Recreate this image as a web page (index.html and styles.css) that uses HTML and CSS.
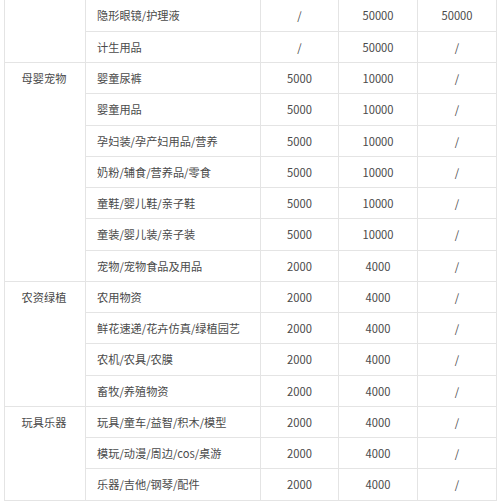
FILE: index.html
```html
<!DOCTYPE html>
<html lang="zh">
<head>
<meta charset="utf-8">
<link rel="stylesheet" href="styles.css">
</head>
<body>
<table class="grid">
  <colgroup>
    <col class="c-cat"><col class="c-sub"><col class="c-num"><col class="c-num2"><col class="c-num3">
  </colgroup>
  <tbody>
    <tr class="cut"><td class="cat" rowspan="2"></td><td class="sub">隐形眼镜/护理液</td><td>/</td><td>50000</td><td>50000</td></tr>
    <tr><td class="sub">计生用品</td><td>/</td><td>50000</td><td>/</td></tr>

    <tr><td class="cat" rowspan="7">母婴宠物</td><td class="sub">婴童尿裤</td><td>5000</td><td>10000</td><td>/</td></tr>
    <tr><td class="sub">婴童用品</td><td>5000</td><td>10000</td><td>/</td></tr>
    <tr><td class="sub">孕妇装/孕产妇用品/营养</td><td>5000</td><td>10000</td><td>/</td></tr>
    <tr><td class="sub">奶粉/辅食/营养品/零食</td><td>5000</td><td>10000</td><td>/</td></tr>
    <tr><td class="sub">童鞋/婴儿鞋/亲子鞋</td><td>5000</td><td>10000</td><td>/</td></tr>
    <tr><td class="sub">童装/婴儿装/亲子装</td><td>5000</td><td>10000</td><td>/</td></tr>
    <tr><td class="sub">宠物/宠物食品及用品</td><td>2000</td><td>4000</td><td>/</td></tr>

    <tr><td class="cat" rowspan="4">农资绿植</td><td class="sub">农用物资</td><td>2000</td><td>4000</td><td>/</td></tr>
    <tr><td class="sub">鲜花速递/花卉仿真/绿植园艺</td><td>2000</td><td>4000</td><td>/</td></tr>
    <tr><td class="sub">农机/农具/农膜</td><td>2000</td><td>4000</td><td>/</td></tr>
    <tr><td class="sub">畜牧/养殖物资</td><td>2000</td><td>4000</td><td>/</td></tr>

    <tr><td class="cat" rowspan="3">玩具乐器</td><td class="sub">玩具/童车/益智/积木/模型</td><td>2000</td><td>4000</td><td>/</td></tr>
    <tr><td class="sub">模玩/动漫/周边/cos/桌游</td><td>2000</td><td>4000</td><td>/</td></tr>
    <tr><td class="sub">乐器/吉他/钢琴/配件</td><td>2000</td><td>4000</td><td>/</td></tr>
  </tbody>
</table>
</body>
</html>
```

FILE: styles.css
```css
html, body {
  margin: 0;
  padding: 0;
  background: #ffffff;
}

body {
  padding-left: 4px;
  font-family: "Noto Sans CJK SC", "Noto Sans", sans-serif;
  font-size: 11.2px;
  color: #4a4a4a;
}

.grid {
  border-collapse: collapse;
  table-layout: fixed;
  width: 492px;
}

.c-cat { width: 81px; }
.c-sub { width: 175px; }
.c-num { width: 78px; }
.c-num2 { width: 79px; }
.c-num3 { width: 79px; }

.grid td {
  border: 1px solid #e4e4e4;
  height: 31.25px;
  padding: 0;
  line-height: 30px;
  text-align: center;
  vertical-align: top;
  white-space: nowrap;
  box-sizing: border-box;
}

.grid td.sub {
  text-align: left;
  padding-left: 11px;
}

.grid td.cat {
  text-align: center;
  padding-right: 2px;
}

.grid tr.cut td {
  border-top: none;
}
```
